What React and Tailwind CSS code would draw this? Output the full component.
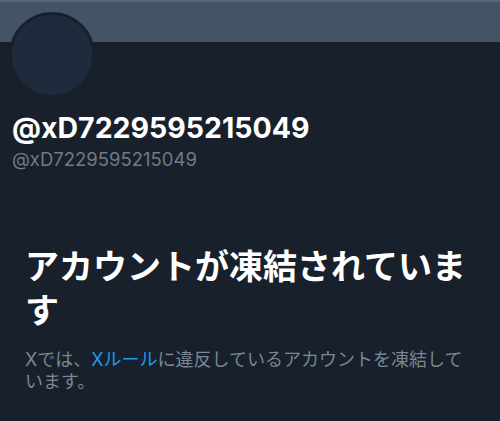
export default function App() {
  return (
    <div
      className="w-[500px] h-[421px] overflow-hidden bg-[#17202b]"
      style={{ fontFamily: 'Inter, "Noto Sans CJK JP", sans-serif' }}
    >
      <div className="h-[2px] bg-[#5a6878]" />
      <div className="h-[40px] bg-[#435467]" />
      <div className="-mt-[30px] ml-[9px] w-[86px] h-[86px] rounded-full border-[3px] border-[#17212d] bg-[#1f2b3c]" />

      <div className="px-[12px] mt-[13px]">
        <h1 className="text-[28.5px] leading-[34px] font-bold text-white">@xD7229595215049</h1>
        <p className="mt-[3px] text-[18.5px] leading-[22px] text-[#6f7b88]">@xD7229595215049</p>
      </div>

      <div className="px-[25px] mt-[75px]">
        <h2 className="text-[34px] leading-[44px] font-bold text-white">
          アカウントが凍結されています
        </h2>
        <p className="mt-[16px] text-[18px] leading-[22px] text-[#7b8794]">
          Xでは、<span className="text-[#1d9bf0]">Xルール</span>に違反しているアカウントを凍結しています。
        </p>
      </div>
    </div>
  );
}
